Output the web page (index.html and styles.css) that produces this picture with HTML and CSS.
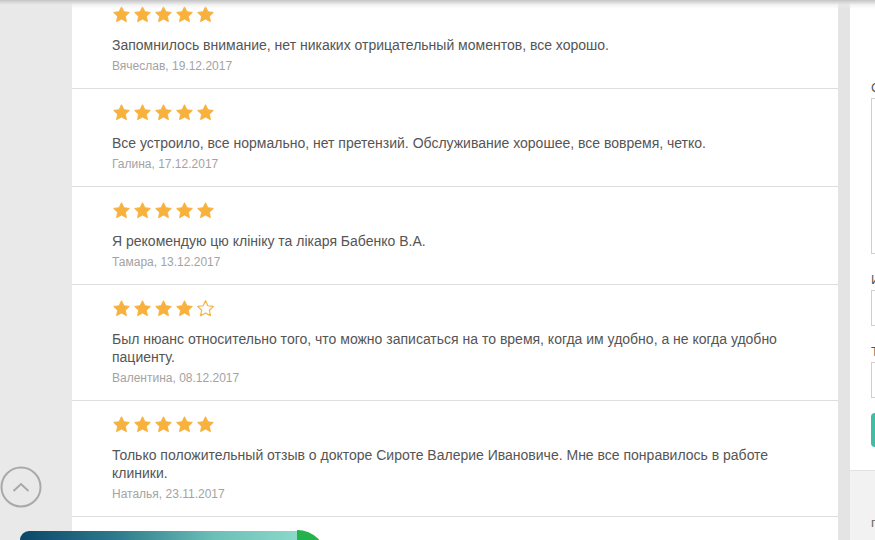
FILE: index.html
```html
<!DOCTYPE html>
<html lang="ru">
<head>
<meta charset="utf-8">
<title>Отзывы</title>
<link rel="stylesheet" href="styles.css">
</head>
<body>
<svg width="0" height="0" class="defs" aria-hidden="true">
  <defs>
    <path id="star" d="M12 2.2l3 6.3 6.9.9-5 4.8 1.3 6.8L12 17.7l-6.2 3.3 1.3-6.8-5-4.8 6.9-.9z" stroke-linejoin="round"/>
  </defs>
</svg>
<div class="page">
  <main class="main">
    <div class="review first">
      <div class="stars">
        <svg class="star" viewBox="0 0 24 24"><use href="#star"/></svg><svg class="star" viewBox="0 0 24 24"><use href="#star"/></svg><svg class="star" viewBox="0 0 24 24"><use href="#star"/></svg><svg class="star" viewBox="0 0 24 24"><use href="#star"/></svg><svg class="star" viewBox="0 0 24 24"><use href="#star"/></svg>
      </div>
      <p class="text">Запомнилось внимание, нет никаких отрицательный моментов, все хорошо.</p>
      <p class="author">Вячеслав, 19.12.2017</p>
    </div>
    <div class="review">
      <div class="stars">
        <svg class="star" viewBox="0 0 24 24"><use href="#star"/></svg><svg class="star" viewBox="0 0 24 24"><use href="#star"/></svg><svg class="star" viewBox="0 0 24 24"><use href="#star"/></svg><svg class="star" viewBox="0 0 24 24"><use href="#star"/></svg><svg class="star" viewBox="0 0 24 24"><use href="#star"/></svg>
      </div>
      <p class="text">Все устроило, все нормально, нет претензий. Обслуживание хорошее, все вовремя, четко.</p>
      <p class="author">Галина, 17.12.2017</p>
    </div>
    <div class="review">
      <div class="stars">
        <svg class="star" viewBox="0 0 24 24"><use href="#star"/></svg><svg class="star" viewBox="0 0 24 24"><use href="#star"/></svg><svg class="star" viewBox="0 0 24 24"><use href="#star"/></svg><svg class="star" viewBox="0 0 24 24"><use href="#star"/></svg><svg class="star" viewBox="0 0 24 24"><use href="#star"/></svg>
      </div>
      <p class="text">Я рекомендую цю клініку та лікаря Бабенко В.А.</p>
      <p class="author">Тамара, 13.12.2017</p>
    </div>
    <div class="review">
      <div class="stars">
        <svg class="star" viewBox="0 0 24 24"><use href="#star"/></svg><svg class="star" viewBox="0 0 24 24"><use href="#star"/></svg><svg class="star" viewBox="0 0 24 24"><use href="#star"/></svg><svg class="star" viewBox="0 0 24 24"><use href="#star"/></svg><svg class="star empty" viewBox="0 0 24 24"><use href="#star"/></svg>
      </div>
      <p class="text">Был нюанс относительно того, что можно записаться на то время, когда им удобно, а не когда удобно пациенту.</p>
      <p class="author">Валентина, 08.12.2017</p>
    </div>
    <div class="review">
      <div class="stars">
        <svg class="star" viewBox="0 0 24 24"><use href="#star"/></svg><svg class="star" viewBox="0 0 24 24"><use href="#star"/></svg><svg class="star" viewBox="0 0 24 24"><use href="#star"/></svg><svg class="star" viewBox="0 0 24 24"><use href="#star"/></svg><svg class="star" viewBox="0 0 24 24"><use href="#star"/></svg>
      </div>
      <p class="text">Только положительный отзыв о докторе Сироте Валерие Ивановиче. Мне все понравилось в работе клиники.</p>
      <p class="author">Наталья, 23.11.2017</p>
    </div>
  </main>
  <div class="gap"></div>
  <aside class="side">
    <div class="side-top">
      <form class="form">
        <label class="label">Сообщение</label>
        <div class="area"></div>
        <label class="label">Имя</label>
        <div class="field"></div>
        <label class="label">Телефон</label>
        <div class="field"></div>
        <div class="btn">Отправить</div>
      </form>
    </div>
    <div class="side-bottom">
      <span class="note">пн-пт</span>
    </div>
  </aside>
</div>
<div class="topshade"></div>
<div class="totop">
  <svg width="42" height="42" viewBox="0 0 42 42">
    <circle cx="21" cy="21" r="19.5" fill="none" stroke="#a9a9a9" stroke-width="2"/>
    <polyline points="13.5,25 21,18 28.5,25" fill="none" stroke="#a9a9a9" stroke-width="2"/>
  </svg>
</div>
<div class="chatbar"></div>
<div class="chatdot"></div>
</body>
</html>
```
FILE: styles.css
```css
html, body {
  margin: 0;
  padding: 0;
  height: 100%;
  overflow: hidden;
}
body {
  background: #e9e9e9;
  font-family: "Liberation Sans", Arial, sans-serif;
}
.defs {
  position: absolute;
  width: 0;
  height: 0;
}
.page {
  display: flex;
  align-items: flex-start;
  height: 540px;
}
.main {
  margin-left: 72px;
  width: 766px;
  height: 540px;
  background: #fff;
  flex: none;
}
.review {
  padding: 14px 40px 13px 40px;
  border-bottom: 1px solid #dedede;
}
.review.first {
  padding-top: 5px;
}
.stars {
  display: flex;
  gap: 2px;
  height: 18px;
  align-items: center;
}
.star {
  width: 19px;
  height: 19px;
  fill: #f7b13c;
  stroke: #f7b13c;
  stroke-width: 1.2;
  overflow: visible;
}
.star.empty {
  fill: none;
  stroke-width: 1.5;
}
.text {
  margin: 13px 0 0;
  font-size: 14px;
  line-height: 18px;
  color: #555;
}
.author {
  margin: 3px 0 0;
  font-size: 12px;
  line-height: 18px;
  color: #a3a3a3;
}
.gap {
  width: 12px;
  height: 540px;
  background: #e4e4e4;
  flex: none;
}
.side {
  width: 25px;
  height: 540px;
  overflow: hidden;
  display: flex;
  flex-direction: column;
  flex: none;
}
.side-top {
  height: 470px;
  background: #fff;
  flex: none;
  border-bottom: 1px solid #e3e3e3;
}
.side-bottom {
  flex: 1;
  background: #f2f2f2;
  padding: 42px 0 0 21px;
}
.note {
  font-size: 13px;
  color: #666;
  white-space: nowrap;
}
.form {
  width: 300px;
  padding: 80px 0 0 21px;
  display: flex;
  flex-direction: column;
}
.label {
  font-size: 13px;
  line-height: 16px;
  color: #555;
  height: 16px;
  margin-bottom: 2px;
}
.area {
  height: 154px;
  border: 1px solid #cfcfcf;
  margin-bottom: 18px;
}
.field {
  height: 34px;
  border: 1px solid #cfcfcf;
  margin-bottom: 18px;
}
.field + .btn {
  margin-top: -3px;
}
.btn {
  height: 34px;
  background: #3dbea5;
  border-radius: 4px;
  color: #fff;
  font-size: 13px;
  line-height: 34px;
  text-align: center;
}
.topshade {
  position: absolute;
  left: 0;
  top: 0;
  width: 875px;
  height: 9px;
  background: linear-gradient(to bottom, #c4c4c4 0px, #d6d6d6 2px, rgba(235,235,235,0.6) 5px, rgba(255,255,255,0) 9px);
  pointer-events: none;
}
.totop {
  position: absolute;
  left: 0;
  top: 466px;
  width: 42px;
  height: 42px;
}
.totop svg {
  display: block;
}
.chatbar {
  position: absolute;
  left: 20px;
  top: 531px;
  width: 277px;
  height: 20px;
  border-radius: 9px 0 0 0;
  background: linear-gradient(to right, #0c4768 0%, #2d7b8c 35%, #6bbfb8 70%, #8ad9c9 100%);
}
.chatdot {
  position: absolute;
  left: 267px;
  top: 530px;
  width: 60px;
  height: 60px;
  border-radius: 50%;
  background: #24b24b;
  clip-path: inset(0 0 0 30px);
}
```
